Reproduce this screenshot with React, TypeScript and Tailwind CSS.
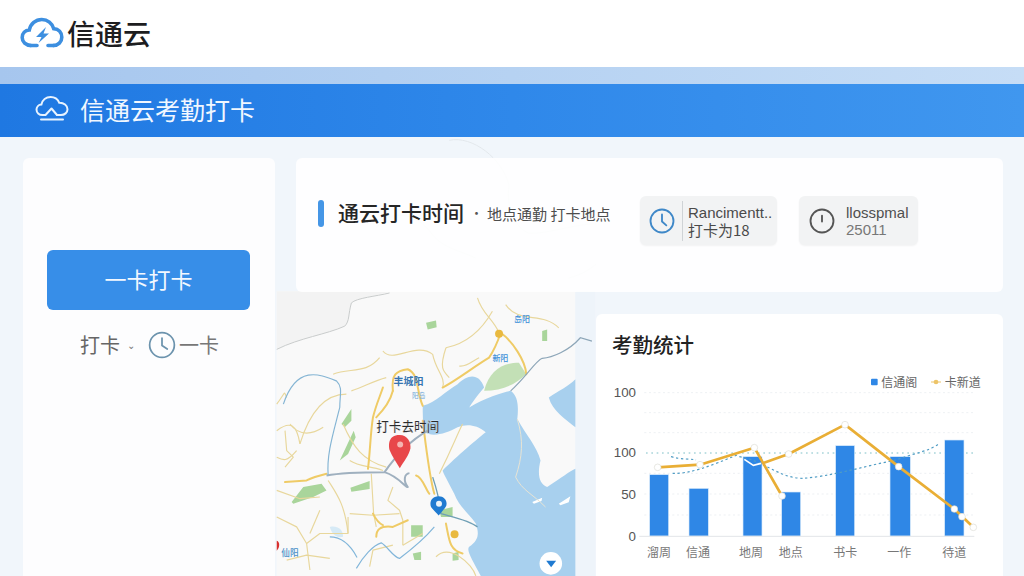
import React from "react";

const CJK = { fontFamily: '"Noto Sans CJK SC", "Noto Sans", sans-serif' };
const LATIN = { fontFamily: '"Liberation Sans", sans-serif' };

function LogoCloud() {
  return (
    <svg width="44" height="32" viewBox="0 0 44 32" fill="none" className="shrink-0">
      <path d="M11 28.5C5.8 28.5 2.2 25 2.2 20.5C2.2 16.3 5.2 13.3 9.3 13C10.6 6.8 15.6 2.5 21.8 2.5C27.6 2.5 32.3 6.3 33.7 11.6C38.6 12 41.8 15.6 41.8 20.2C41.8 25 38.2 28.5 33.2 28.5" stroke="#3d8fe0" strokeWidth="3.6" strokeLinecap="round" />
      <path d="M10 28.5H17M28 28.5H34" stroke="#3d8fe0" strokeWidth="3.6" strokeLinecap="round" />
      <path d="M26 10L16 20H21.5L18.5 26L29 16.5H23.5L26 10Z" fill="#3d8fe0" />
    </svg>
  );
}

function BarCloud() {
  return (
    <svg width="34" height="28" viewBox="0 0 34 28" fill="none" className="shrink-0">
      <path d="M10 20H7.5C4 20 1.5 17.6 1.5 14.6C1.5 11.8 3.6 9.7 6.4 9.5C7.4 5 11 2 15.6 2C19.6 2 22.8 4.3 24.2 7.7C28.8 7.5 32.5 10.4 32.5 14.2C32.5 17.6 29.6 20 26 20H22" stroke="#e8f3ff" strokeWidth="2" strokeLinecap="round" />
      <path d="M10.5 20L16.5 13.5L22 20" stroke="#e8f3ff" strokeWidth="2" strokeLinecap="round" strokeLinejoin="round" />
      <path d="M6 24.5H28" stroke="#e8f3ff" strokeWidth="2" strokeLinecap="round" />
    </svg>
  );
}

function Clock({ size, color, hands, sw = 1.7 }: { size: number; color: string; hands: string; sw?: number }) {
  return (
    <svg width={size} height={size} viewBox="0 0 24 24" fill="none" className="shrink-0">
      <circle cx="12" cy="12" r="10.6" stroke={color} strokeWidth={sw} />
      <path d={hands} stroke={color} strokeWidth={sw} strokeLinecap="round" strokeLinejoin="round" />
    </svg>
  );
}

function MapDrawing() {
  const roads = [
    "M320 290C310 320 300 340 290 380C282 430 282 480 275 535",
    "M350 300C345 250 360 240 395 235C430 250 420 300 440 345",
    "M500 290C540 270 590 230 640 200C660 170 670 140 675 125C710 150 750 210 752 250",
    "M440 390C450 470 460 560 475 610",
    "M510 700C520 750 520 780 560 790",
    "M420 555C440 560 450 600 460 610",
    "M350 300C340 340 310 370 300 380",
  ];
  const thin = [
    "M0 340C30 300 20 300 30 320",
    "M0 420C40 390 60 400 70 460",
    "M70 460C110 330 170 310 210 310",
    "M320 180C350 220 420 150 470 190C480 240 510 260 500 290",
    "M510 170C560 160 610 130 650 60",
    "M170 250C220 230 270 250 310 200",
    "M690 40C730 100 800 60 850 110",
    "M605 20C620 70 650 80 670 125",
    "M560 400C540 440 530 470 490 550",
    "M225 300C260 290 290 270 330 260",
    "M40 400C70 440 110 430 140 410",
    "M200 400C230 470 260 510 330 530",
    "M480 800C520 760 590 820 600 858",
    "M610 200C590 210 570 230 550 225",
    "M520 260C500 240 490 230 510 170",
  ];
  const lower = [
    "M25 0L30 60L50 80L25 110",
    "M0 80C20 90 30 95 60 60",
    "M155 150C180 190 205 220 215 310",
    "M220 250L290 255L370 250",
    "M350 170L335 210L370 240L380 270L380 345",
    "M285 130L292 250L300 290",
    "M90 340L130 310H215",
    "M0 180L70 205L130 200",
    "M0 260L60 290L90 340L100 420",
    "M215 310L215 260",
    "M220 90C250 110 280 105 320 120",
    "M380 345L440 310",
    "M130 240L100 310",
    "M30 390L90 375L160 385",
    "M280 410L290 360L350 345",
  ];
  return (
    <svg width="320" height="439" viewBox="0 -465 960 1323" className="absolute left-[276px] top-0">
      <rect x="0" y="0" width="900" height="858" fill="#f9f9f9" />
      <rect x="900" y="0" width="60" height="858" fill="#eef4fa" />
      <path d="M0 0H340C300 15 240 20 225 35C215 70 220 90 205 105C150 130 70 140 0 175Z" fill="#f3f3f3" />
      <path d="M340 5C300 15 240 20 225 35C215 70 220 90 205 105C150 130 70 140 0 175" fill="none" stroke="#c9cccc" strokeWidth="3" />
      <path d="M440 345C480 335 510 300 545 280C575 250 610 245 625 290C600 320 590 335 580 350C630 320 680 305 705 300C725 315 730 340 725 385C750 430 785 470 795 510C785 550 790 580 815 590C860 560 880 545 900 535V858H615C590 810 570 780 580 770C610 750 610 730 600 700C580 670 550 650 535 610C520 580 500 545 500 540C540 500 610 440 630 425C600 400 570 400 545 410C510 430 470 440 445 425C440 400 440 370 440 345Z" fill="#a8d0ee" />
      <path d="M820 320C850 300 880 285 900 265V410C870 385 830 360 820 320Z" fill="#a8d0ee" />
      <path d="M625 300C640 240 680 215 730 215L752 250C720 280 680 300 625 300Z" fill="#c3e0b6" />
      <path d="M45 635L80 590L135 580L150 600L110 620L50 640Z M450 95L480 88L482 108L455 115Z M195 400L225 355L225 390L205 410Z M190 510L232 420L238 440L215 490Z M405 705H440V740H405Z M222 592L280 572V596L225 604Z M490 660L530 650L530 680L495 680Z M410 790L435 785V810L415 810Z M800 120L815 115V150L800 150Z M530 790L548 785V810L530 812Z" fill="#a9d59b" />
      <path d="M770 635L800 622L798 632L775 640Z M850 640L885 618L880 636L855 645Z" fill="#fff" />
      <path d="M160 710C180 705 200 715 200 740C180 745 165 730 160 710Z" fill="#d6eaf6" />
      <g fill="none" stroke="#e8d79c" strokeWidth="3.5" strokeLinejoin="round">
        {thin.map((d) => (
          <path key={d} d={d} />
        ))}
        <g transform="translate(0 420)">
          {lower.map((d) => (
            <path key={d} d={d} />
          ))}
        </g>
      </g>
      <g fill="none" stroke="#efcb66" strokeWidth="6" strokeLinecap="round" strokeLinejoin="round">
        {roads.map((d) => (
          <path key={d} d={d} />
        ))}
        <g transform="translate(0 420)">
          <path d="M25 155L90 150C110 140 130 135 150 130" />
          <path d="M300 320C300 300 310 285 350 290L395 270" />
          <path d="M290 250C300 270 310 280 320 285" />
        </g>
      </g>
      <path d="M150 555C200 545 260 545 325 545C370 560 385 590 395 590C380 570 385 550 400 548M325 545C370 480 420 440 455 420" fill="none" stroke="#9fb0bf" strokeWidth="6" strokeLinejoin="round" />
      <path d="M470 560C480 590 490 620 495 670C530 680 580 690 605 710" fill="none" stroke="#6f9fb5" strokeWidth="4" />
      <path d="M705 300C750 260 780 210 800 202C830 200 880 180 915 140L950 150" fill="none" stroke="#8da6b8" strokeWidth="3.5" />
      <path d="M20 340C60 220 130 250 180 270C200 290 190 310 190 350C170 430 150 490 155 555" fill="none" stroke="#85b5d4" strokeWidth="3.5" />
      <g transform="translate(0 420)" fill="none" stroke="#82b6da" strokeWidth="3.5">
        <path d="M160 320C190 320 220 340 242 382" />
        <path d="M240 415C260 380 290 345 315 338C335 350 350 380 370 385C410 355 450 320 475 290" />
      </g>
      <path d="M810 650C770 610 740 600 720 560C740 500 745 450 725 385" fill="none" stroke="#e8e4d4" strokeWidth="3" />
      <path d="M520 -455C590 -470 680 -400 700 -320C690 -250 720 -190 760 -175C830 -170 960 -230 1040 -190C1010 -120 960 -60 880 -40M300 -190C340 -250 420 -240 470 -170C500 -130 560 -120 600 -100" fill="none" stroke="#e3e8ec" strokeWidth="3" />
      <circle cx="670" cy="128" r="12" fill="#e9b93f" />
      <circle cx="536" cy="732" r="12" fill="#e9b93f" />
      <path d="M370 433C335 433 337 465 340 478C348 498 360 515 371 533C384 512 398 495 403 474C405 455 395 433 370 433Z" fill="#e8474a" />
      <circle cx="372" cy="462" r="9" fill="#f5b5b2" />
      <path d="M488 618C465 618 460 638 465 650C472 660 482 668 488 676C496 666 506 656 511 646C515 632 505 618 488 618Z" fill="#1f7ad1" />
      <circle cx="489" cy="640" r="9" fill="#e8f2fa" />
      <path d="M0 752C10 755 10 772 0 782Z" fill="#d8302f" />
      <circle cx="826" cy="820" r="34" fill="#fff" />
      <path d="M812 812H842L827 832Z" fill="#1f7ad1" />
      <g style={CJK}>
        <text x="300" y="420" fontSize="38" fill="#2a2a2a" fontWeight="500" stroke="#fff" strokeWidth="0.6">打卡去时间</text>
        <text x="352" y="282" fontSize="30" fill="#3574b0" fontWeight="700">丰城阳</text>
        <text x="715" y="94" fontSize="24" fill="#3d8fd8" fontWeight="500">岛阳</text>
        <text x="650" y="210" fontSize="24" fill="#3d8fd8" fontWeight="500">新阳</text>
        <text x="408" y="322" fontSize="20" fill="#6ea8d8">阳岛</text>
        <text x="14" y="798" fontSize="26" fill="#4a90c8" fontWeight="500">仙阳</text>
      </g>
    </svg>
  );
}

function Chart() {
  const bars = [
    [161, 494, 57],
    [279, 535, 58],
    [441, 440, 57],
    [557, 546, 57],
    [719, 407, 57],
    [882, 440, 61],
    [1046, 390, 58],
  ];
  const labels: [number, string][] = [
    [189, "溜周"], [306, "信通"], [465, "地周"], [584, "地点"], [748, "书卡"], [910, "一作"], [1075, "待道"],
  ];
  const ticks: [number, string, number][] = [
    [120, "100", 262], [120, "100", 442], [120, "50", 567], [120, "0", 694],
  ];
  const dots = [[185, 472], [312, 464], [475, 413], [558, 558], [578, 432], [747, 344], [908, 470], [1075, 597], [1098, 620], [1132, 652]];
  return (
    <svg width="390" height="206" viewBox="30 180 1170 618" className="block" style={CJK}>
      {[248, 308, 368, 490, 552, 615].map((y) => (
        <path key={y} d={`M145 ${y}H1135`} stroke="#e9edf0" strokeWidth="2.5" strokeDasharray="6 8" />
      ))}
      <path d="M150 429H1135" stroke="#7fc0c8" strokeWidth="3" strokeDasharray="5 11" />
      {bars.map(([x, y, w]) => (
        <rect key={x} x={x} y={y} width={w} height={678 - y} fill="#2f87e6" stroke="#d8eafb" strokeWidth="2" />
      ))}
      <path d="M130 679H1135" stroke="#e2e5e8" strokeWidth="3" />
      <path d="M225 440C260 450 280 445 300 450M230 490C280 492 340 470 430 432M430 440C500 450 550 505 620 505C700 500 800 470 900 450C950 430 1000 425 1030 400" fill="none" stroke="#4f9cc4" strokeWidth="3.5" strokeDasharray="7 8" />
      <path d="M445 448L472 466L495 460" fill="none" stroke="#fff" strokeWidth="5" />
      <path d="M185 472L312 464L475 413L558 558M500 460L578 432L747 344L908 470L1075 597L1132 652" fill="none" stroke="#e9ae35" strokeWidth="8" strokeLinejoin="round" />
      {dots.map(([x, y]) => (
        <circle key={x} cx={x} cy={y} r="10" fill="#fff" stroke="#dcdcd4" strokeWidth="2" />
      ))}
      {ticks.map(([x, t, y]) => (
        <text key={y} x={x} y={y} textAnchor="end" fontSize="40" fill="#555" style={LATIN}>{t}</text>
      ))}
      {labels.map(([x, t]) => (
        <text key={x} x={x} y={741} textAnchor="middle" fontSize="36" fill="#777">{t}</text>
      ))}
      <rect x="825" y="206" width="20" height="20" rx="3" fill="#2f87e6" />
      <text x="856" y="230" fontSize="36" fill="#666">信通阁</text>
      <path d="M1005 216H1035" stroke="#edc468" strokeWidth="3" />
      <circle cx="1020" cy="216" r="7" fill="#edc468" />
      <text x="1046" y="230" fontSize="36" fill="#666">卡新道</text>
    </svg>
  );
}

export default function App() {
  return (
    <div className="flex h-[576px] w-[1024px] flex-col overflow-hidden bg-white" style={CJK}>
      <header className="flex h-[67px] shrink-0 items-center gap-[3px] bg-white pb-[2px] pl-[20px]">
        <LogoCloud />
        <span className="text-[28px] font-medium leading-none text-[#1d1d1f]">信通云</span>
      </header>
      <div className="h-[17px] shrink-0 bg-gradient-to-r from-[#a6c6ee] via-[#b6d2f2] to-[#c6ddf6]" />
      <div className="flex h-[53px] shrink-0 items-center gap-[11px] bg-gradient-to-r from-[#1f78e2] via-[#2f88ea] to-[#4097ef] pb-[3px] pl-[35px]">
        <BarCloud />
        <span className="text-[25px] leading-none text-[#f1f7ff]">信通云考勤打卡</span>
      </div>
      <main className="relative flex min-h-0 flex-1 gap-[21px] bg-[#f1f6fb] pl-[23px] pt-[21px]">
        <MapDrawing />
        <section className="relative flex w-[252px] flex-col items-start rounded-t-md bg-[#fdfdfe] pl-[24px] pt-[92px]">
          <button className="h-[60px] w-[203px] rounded-md bg-[#378ee8] pb-[3px] text-[22px] text-[#f3f8ff]">一卡打卡</button>
          <div className="ml-[33px] mt-[20px] flex items-center text-[20px] leading-[30px] text-[#666]">
            <span>打卡</span>
            <span className="ml-[7px] text-[10px] text-[#777]">⌄</span>
            <span className="ml-[13px]"><Clock size={28} color="#6c93ad" hands="M12 6V12.5L16.5 15.5" sw={1.5} /></span>
            <span className="ml-[3px] text-[#777]">一卡</span>
          </div>
        </section>
        <div className="relative flex w-[707px] flex-col gap-[22px]">
          <section className="flex h-[134px] shrink-0 items-start rounded-md bg-white/90 pl-[22px] pt-[38px]">
            <div className="mt-[3px] flex h-[28px] items-center">
              <span className="h-[27px] w-[6px] rounded-full bg-[#4596e6]" />
              <span className="ml-[14px] pb-[2px] text-[21px] font-medium leading-none text-[#262626]">通云打卡时间</span>
              <span className="ml-[6px] text-[13px] text-[#555]">·</span>
              <span className="ml-[4px] w-[123px] whitespace-nowrap text-[15px] leading-none text-[#4d4d4d]">地点通勤 打卡地点</span>
            </div>
            <div className="ml-[30px] flex h-[49px] w-[137px] items-center rounded-md bg-[#f2f3f4] pl-[9px] shadow-[0_1px_2px_rgba(0,0,0,0.05)]">
              <Clock size={26} color="#3f88c8" hands="M12 6V12.5L16 16" />
              <span className="ml-[7px] h-[40px] w-px bg-[#cfd3d6]" />
              <div className="ml-[5px] flex flex-col whitespace-nowrap text-[15px] leading-[17px] text-[#4a4a4a]">
                <span style={LATIN}>Rancimentt..</span>
                <span>打卡为18</span>
              </div>
            </div>
            <div className="ml-[22px] flex h-[49px] w-[119px] items-center rounded-md bg-[#f2f3f4] pl-[10px] shadow-[0_1px_2px_rgba(0,0,0,0.05)]">
              <Clock size={26} color="#555" hands="M12 7V12.5" />
              <div className="ml-[11px] flex flex-col whitespace-nowrap text-[15px] leading-[17px] text-[#4f4f4f]" style={LATIN}>
                <span>llosspmal</span>
                <span className="text-[#777]">25011</span>
              </div>
            </div>
          </section>
          <div className="flex min-h-0 flex-1 justify-end">
            <section className="flex w-[407px] flex-col rounded-t-md bg-white/95 pl-[10px] pt-[15px]">
              <h2 className="pl-[6px] text-[20.5px] font-medium leading-[30px] text-[#222]">考勤统计</h2>
              <div className="mt-[11px]"><Chart /></div>
            </section>
          </div>
        </div>
      </main>
    </div>
  );
}
